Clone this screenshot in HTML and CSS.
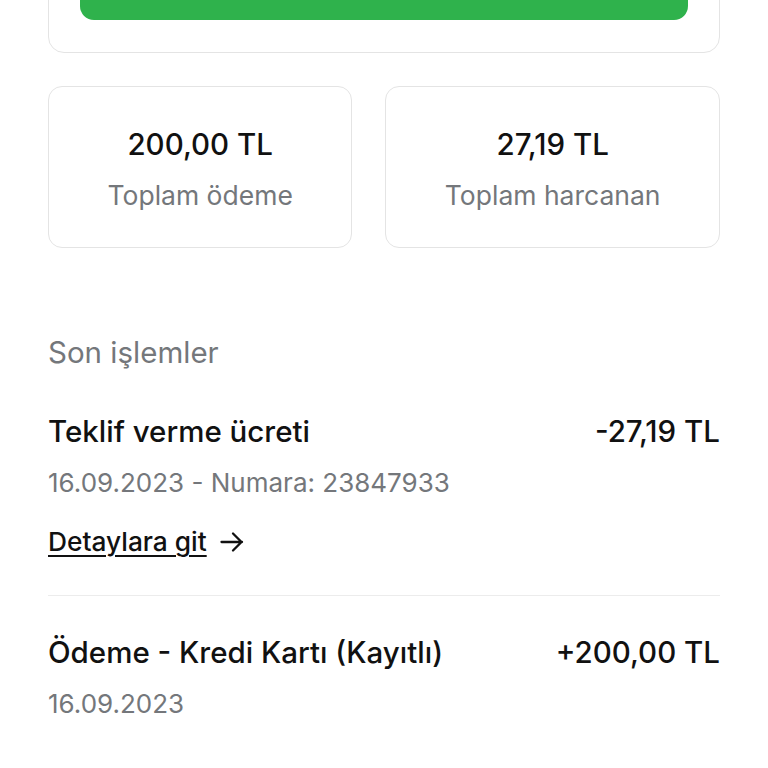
FILE: index.html
```html
<!DOCTYPE html>
<html lang="tr">
<head>
    <meta charset="UTF-8">
    <meta name="viewport" content="width=device-width, initial-scale=1.0">
    <title>Cüzdan</title>
    <link rel="stylesheet" href="styles.css">
</head>
<body>
    <div class="page">
        <!-- bakiye kartı (üstü kesik) -->
        <div class="card-top">
            <a href="#" class="btn-green" aria-label="Bakiye yükle"></a>
        </div>

        <div class="stats">
            <div class="stat-card">
                <p class="stat-value">200,00 TL</p>
                <p class="stat-label">Toplam ödeme</p>
            </div>
            <div class="stat-card">
                <p class="stat-value">27,19 TL</p>
                <p class="stat-label">Toplam harcanan</p>
            </div>
        </div>

        <h2 class="section-title">Son işlemler</h2>

        <div class="tx">
            <div class="tx-row">
                <span class="tx-name">Teklif verme ücreti</span>
                <span class="tx-amount">-27,19 TL</span>
            </div>
            <p class="tx-meta">16.09.2023 - Numara: 23847933</p>
            <a href="#" class="tx-link">
                <span>Detaylara git</span>
                <svg width="24" height="24" viewBox="0 0 24 24" fill="none" stroke="#111" stroke-width="2.3" stroke-linecap="round" stroke-linejoin="round">
                    <path d="M1.5 12h20.5M13 3.5l8.5 8.5-8.5 8.5"/>
                </svg>
            </a>
        </div>

        <div class="tx">
            <div class="tx-row">
                <span class="tx-name">Ödeme - Kredi Kartı (Kayıtlı)</span>
                <span class="tx-amount">+200,00 TL</span>
            </div>
            <p class="tx-meta">16.09.2023</p>
        </div>
    </div>
</body>
</html>
```

FILE: styles.css
```css
body {
    font-family: Inter, Roboto, Arial, sans-serif;
    background-color: #fff;
    color: #111;
    margin: 0;
    padding: 0;
}

p, h2 {
    margin: 0;
}

.page {
    margin-top: -64px;
    padding: 0 48px;
}

.card-top {
    border: 1px solid #e4e4e4;
    border-radius: 16px;
    padding: 31px 31px 32px;
}

.btn-green {
    display: block;
    height: 52px;
    background-color: #2fb24c;
    border-radius: 14px;
}

.stats {
    display: flex;
    gap: 33px;
    margin-top: 33px;
}

.stat-card {
    flex: 1 1 auto;
    border: 1px solid #e4e4e4;
    border-radius: 14px;
    padding: 39px 0 34px;
    text-align: center;
}

.stat-value {
    font-size: 29.5px;
    font-weight: 500;
    line-height: 36px;
}

.stat-label {
    margin-top: 15px;
    font-size: 26.5px;
    line-height: 36px;
    color: #74777b;
}

.section-title {
    margin-top: 86px;
    font-size: 29.5px;
    font-weight: 400;
    line-height: 36px;
    color: #74777b;
}

.tx {
    padding: 43px 0 35px;
}

.tx + .tx {
    border-top: 1px solid #ececec;
    padding-top: 38px;
}

.tx-row {
    display: flex;
    justify-content: space-between;
    font-size: 29.5px;
    font-weight: 500;
    line-height: 36px;
}

.tx-meta {
    margin-top: 16px;
    font-size: 26px;
    line-height: 36px;
    color: #74777b;
}

.tx-link {
    display: flex;
    align-items: center;
    gap: 13px;
    margin-top: 23px;
    font-size: 26.3px;
    font-weight: 500;
    line-height: 36px;
    color: #111;
    text-decoration: none;
}

.tx-link span {
    text-decoration: underline;
    text-underline-offset: 4px;
    text-decoration-thickness: 2px;
}
```
